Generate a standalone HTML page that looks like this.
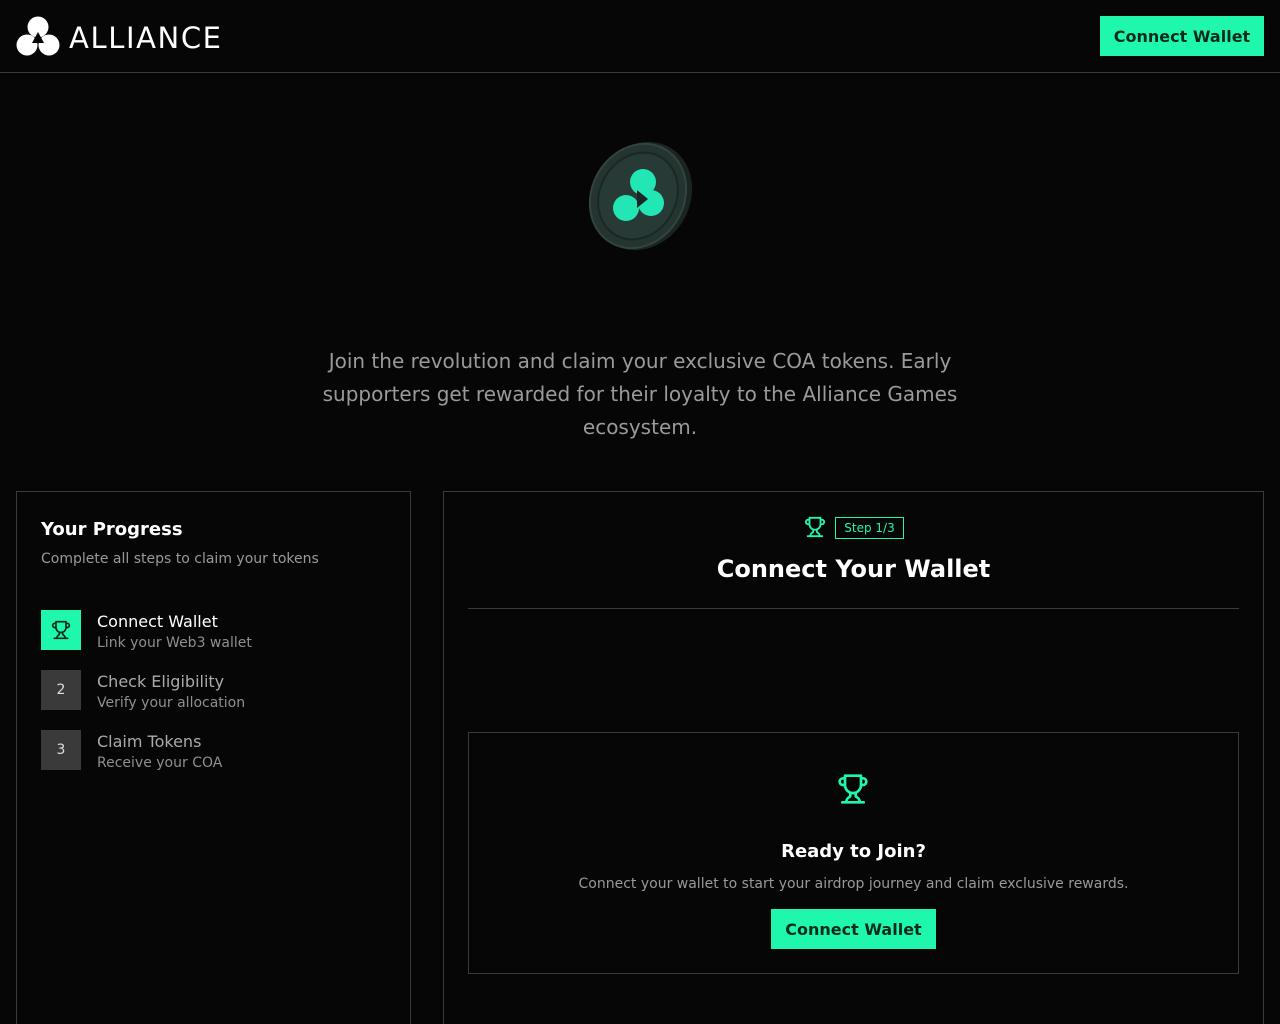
<!DOCTYPE html>
<html><head><meta charset="utf-8"><style>
*{box-sizing:border-box;margin:0;padding:0}
html,body{width:1280px;height:1024px;overflow:hidden}
body{background:#060606;font-family:"DejaVu Sans",sans-serif;color:#fff;position:relative}
.hdr{position:absolute;left:0;top:0;width:1280px;height:73px;border-bottom:1px solid #3a3a3a}
.btn{background:#1ff7ad;color:#062a1d;font-weight:bold;font-size:16px;display:flex;align-items:center;justify-content:center;position:absolute}
.abs{position:absolute}
.panel{position:absolute;border:1px solid #3a3a3a}
.sq{position:absolute;left:41px;width:40px;height:40px;background:#3a3a3a;color:#ddd;font-size:14px;display:flex;align-items:center;justify-content:center}
.t{position:absolute;left:97px;font-size:16px;color:#aaa}
.s{position:absolute;left:97px;font-size:14px;color:#8f8f8f}
</style></head><body>
<div class="hdr">
<svg class="abs" style="left:16px;top:16px" width="44" height="40" viewBox="0 0 44 40">
<circle cx="22" cy="11" r="10.5" fill="#fff"/><circle cx="11" cy="29" r="10.5" fill="#fff"/><circle cx="33" cy="29" r="10.5" fill="#fff"/>
<path d="M22 16 L28 27 L16 27 Z" fill="#060606"/></svg>
<div class="abs" style="left:69px;top:21px;font-size:29px;letter-spacing:1.6px;font-family:'DejaVu Sans',sans-serif;font-weight:normal">ALLIANCE</div>
<div class="btn" style="left:1100px;top:16px;width:164px;height:40px">Connect Wallet</div>
</div>
<svg class="abs" style="left:585px;top:138px" width="110" height="118" viewBox="0 0 110 118">
<ellipse cx="57" cy="58" rx="48" ry="56" transform="rotate(30 57 58)" fill="#1a2421"/>
<ellipse cx="53" cy="58" rx="46" ry="54" transform="rotate(30 53 58)" fill="#243430" stroke="#33443f" stroke-width="2"/>
<ellipse cx="53" cy="58" rx="38" ry="45" transform="rotate(30 53 58)" fill="#283a35" stroke="#1a2724" stroke-width="2"/>
<circle cx="58" cy="44" r="13" fill="#22e6b4"/><circle cx="41" cy="70" r="13" fill="#22e6b4"/><circle cx="66" cy="65" r="13" fill="#22e6b4"/>
<path d="M52 52 L63 61 L52 70 Z" fill="#1a2724"/></svg>
<div class="abs" style="left:300px;top:345px;width:680px;text-align:center;font-size:20px;line-height:33px;color:#9a9a9a">Join the revolution and claim your exclusive COA tokens. Early supporters get rewarded for their loyalty to the Alliance Games ecosystem.</div>
<div class="panel" style="left:16px;top:491px;width:395px;height:560px"></div>
<div class="abs" style="left:41px;top:519px;font-size:18px;font-weight:bold">Your Progress</div>
<div class="abs" style="left:41px;top:551px;font-size:14px;color:#999">Complete all steps to claim your tokens</div>
<div class="sq" style="top:610px;background:#1ff7ad"><svg width="20" height="20" viewBox="0 0 24 24" fill="none" stroke="#062a1d" stroke-width="2" stroke-linecap="round" stroke-linejoin="round"><path d="M6 9H4.5a2.5 2.5 0 0 1 0-5H6M18 9h1.5a2.5 2.5 0 0 0 0-5H18M4 22h16M10 14.7V17c0 .6-.5 1-1 1.2C7.9 18.8 7 20.2 7 22M14 14.7V17c0 .6.5 1 1 1.2 1.1.6 2 2 2 3.8M18 2H6v7a6 6 0 0 0 12 0V2Z"/></svg></div>
<div class="t" style="top:612px;color:#fff">Connect Wallet</div><div class="s" style="top:635px">Link your Web3 wallet</div>
<div class="sq" style="top:670px">2</div>
<div class="t" style="top:672px">Check Eligibility</div><div class="s" style="top:695px">Verify your allocation</div>
<div class="sq" style="top:730px">3</div>
<div class="t" style="top:732px">Claim Tokens</div><div class="s" style="top:755px">Receive your COA</div>
<div class="panel" style="left:443px;top:491px;width:821px;height:560px"></div>
<svg class="abs" style="left:804px;top:516px" width="22" height="22" viewBox="0 0 24 24" fill="none" stroke="#1ff7ad" stroke-width="2" stroke-linecap="round" stroke-linejoin="round"><path d="M6 9H4.5a2.5 2.5 0 0 1 0-5H6M18 9h1.5a2.5 2.5 0 0 0 0-5H18M4 22h16M10 14.7V17c0 .6-.5 1-1 1.2C7.9 18.8 7 20.2 7 22M14 14.7V17c0 .6.5 1 1 1.2 1.1.6 2 2 2 3.8M18 2H6v7a6 6 0 0 0 12 0V2Z"/></svg>
<div class="abs" style="left:835px;top:517px;width:69px;height:22px;border:1px solid #1ff7ad;color:#1ff7ad;font-size:12px;text-align:center;line-height:20px">Step 1/3</div>
<div class="abs" style="left:443px;top:555px;width:821px;text-align:center;font-size:24px;font-weight:bold">Connect Your Wallet</div>
<div class="abs" style="left:468px;top:608px;width:771px;height:1px;background:#3a3a3a"></div>
<div class="panel" style="left:468px;top:732px;width:771px;height:242px"></div>
<svg class="abs" style="left:837px;top:773px" width="32" height="32" viewBox="0 0 24 24" fill="none" stroke="#1ff7ad" stroke-width="2" stroke-linecap="round" stroke-linejoin="round"><path d="M6 9H4.5a2.5 2.5 0 0 1 0-5H6M18 9h1.5a2.5 2.5 0 0 0 0-5H18M4 22h16M10 14.7V17c0 .6-.5 1-1 1.2C7.9 18.8 7 20.2 7 22M14 14.7V17c0 .6.5 1 1 1.2 1.1.6 2 2 2 3.8M18 2H6v7a6 6 0 0 0 12 0V2Z"/></svg>
<div class="abs" style="left:468px;top:841px;width:771px;text-align:center;font-size:18px;font-weight:bold">Ready to Join?</div>
<div class="abs" style="left:468px;top:876px;width:771px;text-align:center;font-size:14px;color:#999">Connect your wallet to start your airdrop journey and claim exclusive rewards.</div>
<div class="btn" style="left:771px;top:909px;width:165px;height:40px">Connect Wallet</div>
</body></html>
